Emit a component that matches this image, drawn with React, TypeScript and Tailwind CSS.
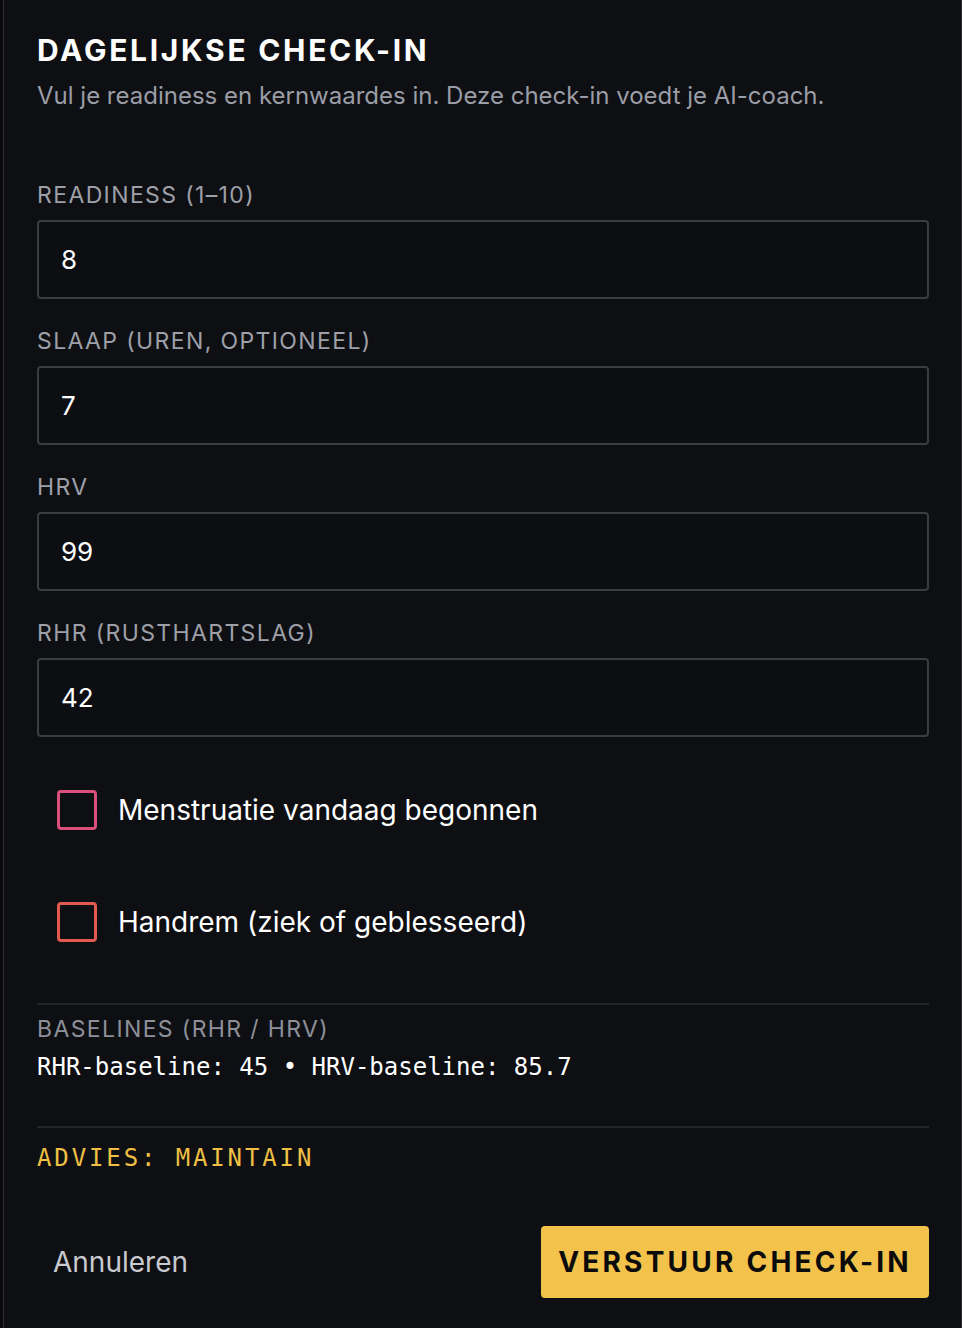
const fields = [
  { label: "Readiness (1–10)", value: "8" },
  { label: "Slaap (uren, optioneel)", value: "7" },
  { label: "HRV", value: "99" },
  { label: "RHR (rusthartslag)", value: "42" },
];

const mono = "font-['DejaVu_Sans_Mono','Liberation_Mono',monospace]";

function Field({ label, value }: { label: string; value: string }) {
  return (
    <div className="flex flex-col gap-[11px]">
      <label className="text-[23px] leading-[28px] uppercase tracking-[0.06em] text-[#9da0a8]">
        {label}
      </label>
      <div className="flex h-[79px] items-center rounded-[4px] border-2 border-[#3b3c41] bg-[#0d0e12] pl-[22px] text-[26px] text-white">
        {value}
      </div>
    </div>
  );
}

function Check({ label, tone }: { label: string; tone: string }) {
  return (
    <label className="flex items-center gap-[21px] pl-[20px]">
      <span className={`h-[40px] w-[40px] rounded-[4px] border-[3px] ${tone}`} />
      <span className="text-[28px] leading-[36px] text-white">{label}</span>
    </label>
  );
}

export default function App() {
  return (
    <div className="flex h-[1328px] bg-[#0a0a0c] font-['Inter','Noto_Sans',sans-serif]">
      <div className="ml-[3px] flex flex-1 flex-col border-x border-x-[#2b2b30] bg-[#0e0f13] pl-[33px] pr-[32px] pt-[32px]">
        <h2 className="text-[30px] font-bold leading-[36px] tracking-[0.09em] text-white">
          DAGELIJKSE CHECK-IN
        </h2>
        <p className="mt-[12px] text-[24px] leading-[32px] text-[#9a9da6]">
          Vul je readiness en kernwaardes in. Deze check-in voedt je AI-coach.
        </p>

        <div className="mt-[69px] flex flex-col gap-[28px]">
          {fields.map((f) => (
            <Field key={f.label} label={f.label} value={f.value} />
          ))}
        </div>

        <div className="mt-[53px] flex flex-col gap-[72px]">
          <Check label="Menstruatie vandaag begonnen" tone="border-[#db4f7b]" />
          <Check label="Handrem (ziek of geblesseerd)" tone="border-[#e2594f]" />
        </div>

        <div className="mt-[61px] border-t-2 border-[#24252a] pt-[10px]">
          <div className="text-[23px] leading-[28px] uppercase tracking-[0.06em] text-[#8d9099]">
            Baselines (RHR / HRV)
          </div>
          <div className={`mt-[8px] text-[24px] leading-[32px] text-white ${mono}`}>
            RHR-baseline: 45 • HRV-baseline: 85.7
          </div>
        </div>

        <div className="mt-[43px] border-t-2 border-[#24252a] pt-[14px]">
          <div className={`text-[24px] leading-[32px] tracking-[0.12em] text-[#f0c044] ${mono}`}>
            ADVIES: MAINTAIN
          </div>
        </div>

        <div className="mt-[52px] flex items-center justify-between">
          <button className="px-[16px] text-[28px] text-[#c9cacf]">Annuleren</button>
          <button className="flex h-[72px] w-[388px] items-center justify-center rounded-[4px] bg-[#f2c24b] text-[28px] font-bold tracking-[0.115em] text-[#0b0b0c]">
            VERSTUUR CHECK-IN
          </button>
        </div>
      </div>
    </div>
  );
}
